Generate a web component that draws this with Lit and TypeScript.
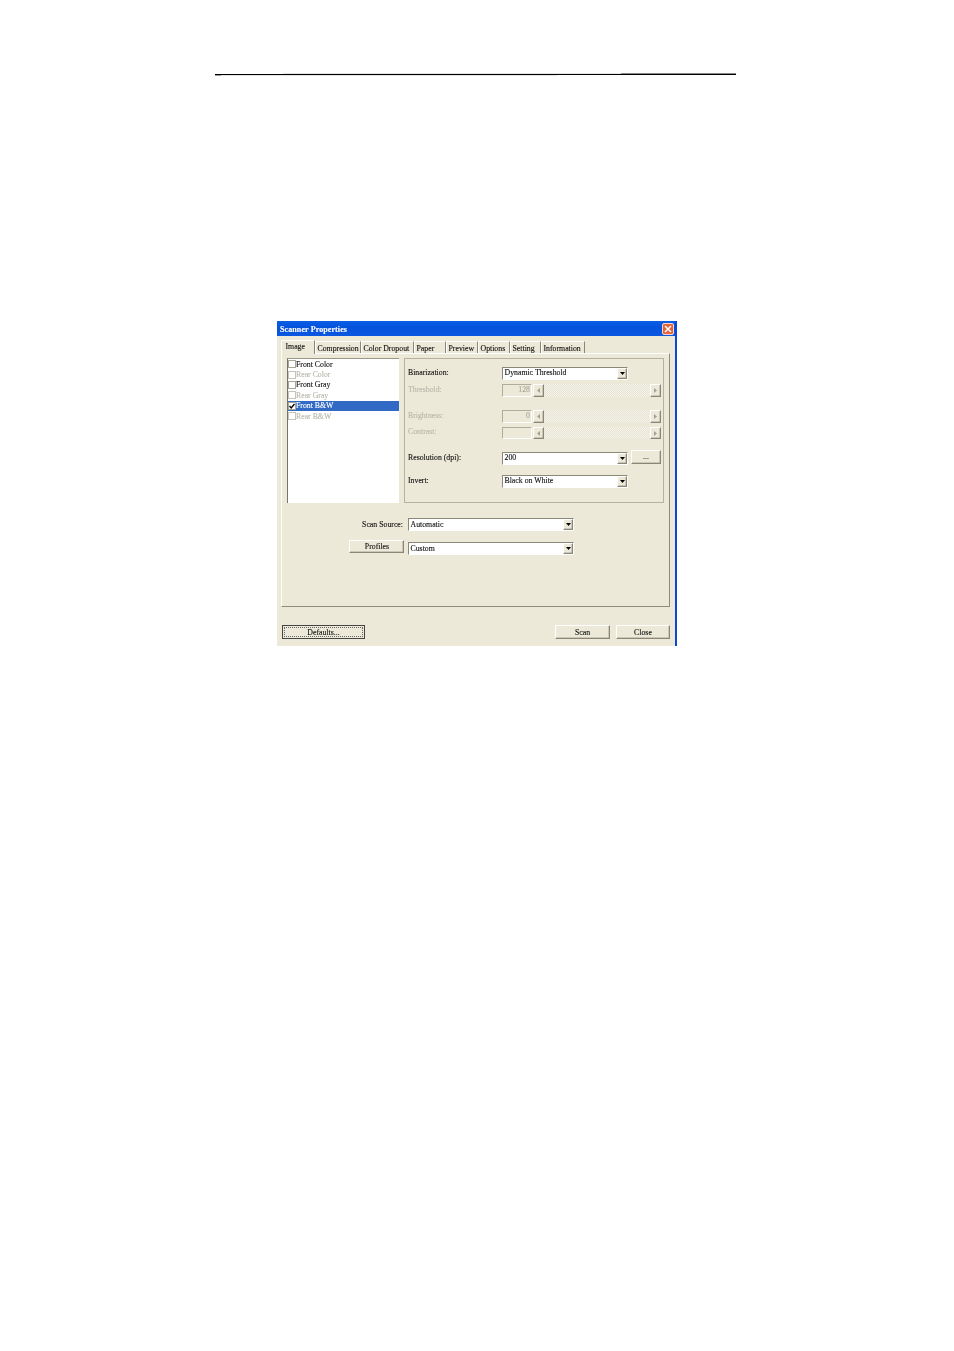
import { LitElement, html, css, svg } from "lit";
import { customElement } from "lit/decorators.js";

const LIST = [
  { t: "Front Color", on: true },
  { t: "Rear Color", on: false },
  { t: "Front Gray", on: true },
  { t: "Rear Gray", on: false },
  { t: "Front B&W", on: true, sel: true },
  { t: "Rear B&W", on: false },
];
const TABS = [
  ["Image", 34], ["Compression", 46], ["Color Dropout", 53], ["Paper", 32],
  ["Preview", 32], ["Options", 32], ["Setting", 31], ["Information", 44],
] as const;

const down = svg`<svg class="ico" width="5" height="3" viewBox="0 0 5 3"><path d="M0 0h5L2.5 3z" fill="#000"/></svg>`;
const arrow = (left: boolean) => svg`<svg class="ico" width="3" height="5" viewBox="0 0 3 5"><path d="${left ? "M3 0v5L0 2.5z" : "M0 0v5l3-2.5z"}" fill="#a5a294"/></svg>`;

@customElement("app-root")
export class AppRoot extends LitElement {
  static styles = css`
    :host { display: block; height: 1351px; background: #fff; font-family: "Liberation Serif", serif; font-size: 7.8px; color: #111; overflow: hidden; }
    .rule { position: relative; height: 1.5px; width: 521px; margin: 73.5px 0 0 215px; background: #000; }
    .rule::before { content: ""; position: absolute; left: 0; right: 0; top: -1px; height: 1px; background: linear-gradient(90deg, transparent 13%, #e4e4e4 13% 78%, #8a8a8a 78%); }
    .rule::after { content: ""; position: absolute; left: 0; top: 1.5px; height: 1px; width: 342px; background: linear-gradient(90deg, #999 6px, #e4e4e4 6px); }
    .dialog { box-sizing: border-box; width: 400px; height: 325px; margin: 246px 0 0 277px; background: #ece9d8; border-right: 2px solid #0c46d6; display: flex; flex-direction: column; filter: blur(0.35px); -webkit-text-stroke: 0.12px currentColor; }
    .title { box-sizing: border-box; height: 15px; flex: none; background: linear-gradient(#0a5fe6, #0553dd 40%, #0a58e2); color: #fff; font-weight: bold; display: flex; align-items: center; justify-content: space-between; padding: 0 0 0 3px; letter-spacing: 0.1px; font-size: 8px; }
    .title > span { padding-top: 1px; }
    .close { width: 12px; height: 12px; margin-right: 1px; box-sizing: border-box; border: 1px solid #f2d6cc; border-radius: 2px; background: #e2643c; display: flex; align-items: center; justify-content: center; }
    .tabs { display: flex; height: 13px; margin: 4px 0 0 4px; flex: none; align-items: flex-end; }
    .tab { box-sizing: border-box; height: 12px; border-top: 1px solid #fff; border-left: 1px solid #fff; border-right: 1px solid #8a8778; padding-left: 1.5px; line-height: 13px; white-space: nowrap; }
    .tab.active { height: 14px; margin-bottom: -1px; background: #ece9d8; position: relative; z-index: 1; padding-left: 3.5px; line-height: 12px; }
    .panel { box-sizing: border-box; width: 389px; height: 254px; margin-left: 4px; flex: none; border: 1px solid; border-color: #fff #8f8c7c #8f8c7c #fff; padding: 4px 0 0 5px; }
    .top { display: flex; gap: 5px; }
    .list { box-sizing: border-box; width: 112px; height: 145px; background: #fff; border-left: 1.5px solid #77756a; border-top: 1px solid #9a9789; display: grid; grid-auto-rows: 10.4px; align-content: start; }
    .item { display: flex; align-items: center; color: #b9b7ab; white-space: nowrap; }
    .item.on { color: #111; }
    .item.sel { background: #316ac5; color: #fff; }
    .check { box-sizing: border-box; width: 8px; height: 8px; flex: none; border: 1px solid #c6c4b8; background: #fff; display: flex; }
    .item.on .check { border-color: #a8a699; }
    .group { box-sizing: border-box; width: 260px; height: 145px; border: 1px solid #fff; outline: 1px solid #b5b2a2; outline-offset: -1px; padding: 8px 2px 0 3px; }
    .row { display: grid; grid-template-columns: 94px 126px 3px 30px; height: 12px; align-items: center; }
    .row > span:first-child { padding-bottom: 3px; }
    .row.tall { height: 13px; }
    .m5 { margin-top: 5px; } .m13 { margin-top: 13px; } .m4 { margin-top: 4px; } .m10 { margin-top: 10px; }
    .row > span.dim { color: #b9b7ab; }
    .combo { box-sizing: border-box; height: 100%; background: #fff; border: 1px solid; border-color: #8b8878 #fff #fff #8b8878; display: flex; align-items: center; justify-content: space-between; padding-left: 1.5px; white-space: nowrap; }
    .combo > span { padding-bottom: 2px; }
    .btn3d { box-sizing: border-box; background: #ece9d8; border: 1px solid; border-color: #fff #8a8778 #8a8778 #fff; box-shadow: inset -0.5px -0.5px 0 #aca899; display: flex; align-items: center; justify-content: center; }
    .combo .btn3d { width: 10px; height: 100%; flex: none; }
    .slider { display: flex; grid-column: 2 / 5; height: 100%; }
    .edit { box-sizing: border-box; width: 30px; height: 100%; flex: none; border: 1px solid; border-color: #b0ad9d #fff #fff #b0ad9d; color: #aaa89b; text-align: right; padding-right: 1px; line-height: 9px; }
    .sb { flex: 1; margin-left: 1px; display: flex; height: 100%; background-color: #f5f4ec; background-image: conic-gradient(#e6e3d3 25%, transparent 0 50%, #e6e3d3 0 75%, transparent 0); background-size: 2px 2px; }
    .sb .btn3d { width: 11px; flex: none; }
    .sb .gap { flex: 1; }
    .more { box-sizing: border-box; height: 14px; margin-top: -2px; align-self: start; color: #444; padding-bottom: 2px; }
    .lower { display: grid; grid-template-columns: 112px 166px; column-gap: 4px; grid-template-rows: 13px 13px; row-gap: 11px; margin: 15px 0 0 0; padding-left: 5px; align-items: center; }
    .lower .combo > span { padding-bottom: 0; }
    .lower .lbl { text-align: right; padding-bottom: 1px; padding-right: 1px; }
    .profiles { box-sizing: border-box; justify-self: end; width: 55px; height: 13px; margin-top: -3px; margin-bottom: 1px; padding-left: 1px; }
    .footer { display: flex; justify-content: flex-end; gap: 6px; margin-top: 18px; padding: 0 5px; height: 14px; flex: none; }
    .foot { box-sizing: border-box; width: 55px; height: 14px; }
    .foot.close-btn { width: 54px; }
    .foot.def { width: 83px; margin-right: auto; border: 1px solid #444; box-shadow: none; padding: 1px; }
    .foot.def span { box-sizing: border-box; flex: 1; height: 100%; border: 1px dotted #666; text-align: center; line-height: 9px; }
    .ico { display: block; }
  `;

  private combo(text: string) {
    return html`<div class="combo"><span>${text}</span><div class="btn3d">${down}</div></div>`;
  }
  private slider(value: string) {
    return html`<div class="slider"><div class="edit">${value}</div><div class="sb"><div class="btn3d">${arrow(true)}</div><div class="gap"></div><div class="btn3d">${arrow(false)}</div></div></div>`;
  }

  render() {
    return html`
      <div class="rule"></div>
      <div class="dialog">
        <div class="title"><span>Scanner Properties</span>
          <div class="close"><svg width="8" height="8" viewBox="0 0 8 8"><path d="M1 1l6 6M7 1L1 7" stroke="#fff" stroke-width="1.5"/></svg></div>
        </div>
        <div class="tabs">
          ${TABS.map(([t, w], i) => html`<div class="tab ${i === 0 ? "active" : ""}" style="width:${w}px">${t}</div>`)}
        </div>
        <div class="panel">
          <div class="top">
            <div class="list">
              ${LIST.map((it) => html`<div class="item ${it.on ? "on" : ""} ${it.sel ? "sel" : ""}">
                <span class="check">${it.sel ? svg`<svg width="6" height="6" viewBox="0 0 6 6"><path d="M0.5 3l1.7 2L5.5 1" fill="none" stroke="#000" stroke-width="1.3"/></svg>` : ""}</span>${it.t}</div>`)}
            </div>
            <div class="group">
              <div class="row"><span>Binarization:</span>${this.combo("Dynamic Threshold")}</div>
              <div class="row tall m5"><span class="dim">Threshold:</span>${this.slider("128")}</div>
              <div class="row tall m13"><span class="dim">Brightness:</span>${this.slider("0")}</div>
              <div class="row m4"><span class="dim">Contrast:</span>${this.slider("")}</div>
              <div class="row tall m13"><span>Resolution (dpi):</span>${this.combo("200")}<i></i><div class="btn3d more">...</div></div>
              <div class="row m10"><span>Invert:</span>${this.combo("Black on White")}</div>
            </div>
          </div>
          <div class="lower">
            <span class="lbl">Scan Source:</span>${this.combo("Automatic")}
            <div class="btn3d profiles">Profiles</div>${this.combo("Custom")}
          </div>
        </div>
        <div class="footer">
          <div class="btn3d foot def"><span>Defaults...</span></div>
          <div class="btn3d foot">Scan</div>
          <div class="btn3d foot close-btn">Close</div>
        </div>
      </div>
    `;
  }
}
